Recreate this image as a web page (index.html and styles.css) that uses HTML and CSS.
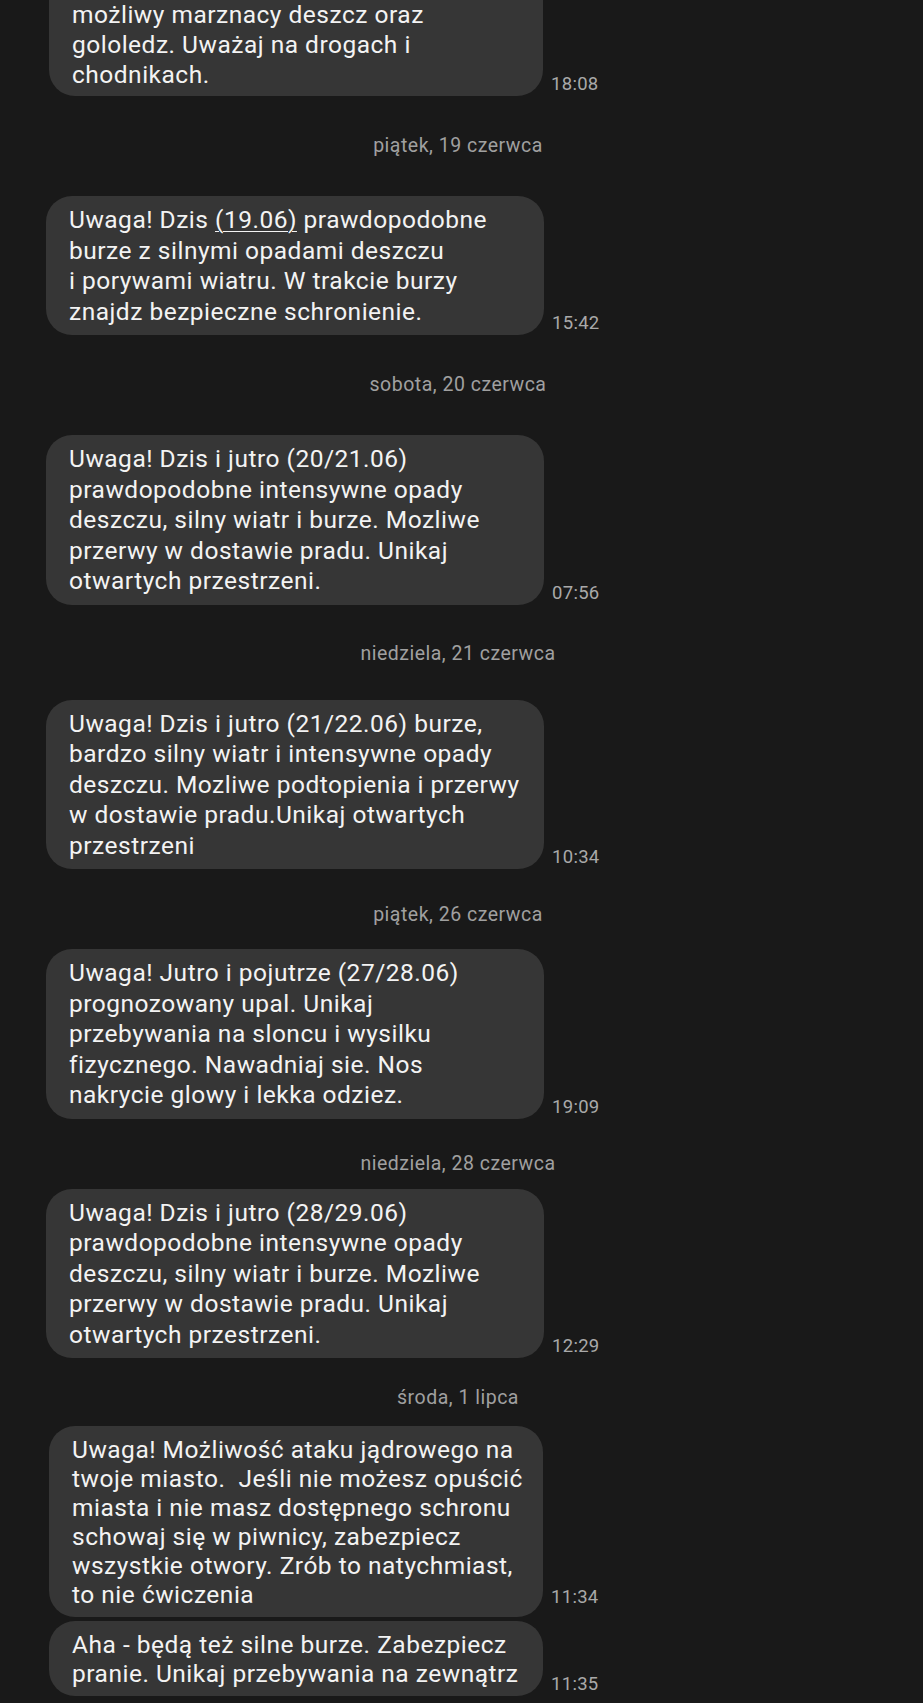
FILE: index.html
```html
<!DOCTYPE html>
<html>

<head>
    <link rel="stylesheet" href="styles.css">
</head>

<body>
    <div class="thread">
        <div class="row row-shift">
            <div class="bubble bubble-cut">
                możliwy marznacy deszcz oraz<br>
                gololedz. Uważaj na drogach i<br>
                chodnikach.
            </div>
            <span class="time">18:08</span>
        </div>

        <div class="date">piątek, 19 czerwca</div>
        <div class="row">
            <div class="bubble">
                Uwaga! Dzis <u>(19.06)</u> prawdopodobne<br>
                burze z silnymi opadami deszczu<br>
                i porywami wiatru. W trakcie burzy<br>
                znajdz bezpieczne schronienie.
            </div>
            <span class="time">15:42</span>
        </div>

        <div class="date">sobota, 20 czerwca</div>
        <div class="row">
            <div class="bubble">
                Uwaga! Dzis i jutro (20/21.06)<br>
                prawdopodobne intensywne opady<br>
                deszczu, silny wiatr i burze. Mozliwe<br>
                przerwy w dostawie pradu. Unikaj<br>
                otwartych przestrzeni.
            </div>
            <span class="time">07:56</span>
        </div>

        <div class="date date-b">niedziela, 21 czerwca</div>
        <div class="row">
            <div class="bubble">
                Uwaga! Dzis i jutro (21/22.06) burze,<br>
                bardzo silny wiatr i intensywne opady<br>
                deszczu. Mozliwe podtopienia i przerwy<br>
                w dostawie pradu.Unikaj otwartych<br>
                przestrzeni
            </div>
            <span class="time">10:34</span>
        </div>

        <div class="date date-c">piątek, 26 czerwca</div>
        <div class="row">
            <div class="bubble">
                Uwaga! Jutro i pojutrze (27/28.06)<br>
                prognozowany upal. Unikaj<br>
                przebywania na sloncu i wysilku<br>
                fizycznego. Nawadniaj sie. Nos<br>
                nakrycie glowy i lekka odziez.
            </div>
            <span class="time">19:09</span>
        </div>

        <div class="date date-d">niedziela, 28 czerwca</div>
        <div class="row">
            <div class="bubble">
                Uwaga! Dzis i jutro (28/29.06)<br>
                prawdopodobne intensywne opady<br>
                deszczu, silny wiatr i burze. Mozliwe<br>
                przerwy w dostawie pradu. Unikaj<br>
                otwartych przestrzeni.
            </div>
            <span class="time">12:29</span>
        </div>

        <div class="date date-e">środa, 1 lipca</div>
        <div class="row row-shift">
            <div class="bubble bubble-tight">
                Uwaga! Możliwość ataku jądrowego na<br>
                twoje miasto.&nbsp; Jeśli nie możesz opuścić<br>
                miasta i nie masz dostępnego schronu<br>
                schowaj się w piwnicy, zabezpiecz<br>
                wszystkie otwory. Zrób to natychmiast,<br>
                to nie ćwiczenia
            </div>
            <span class="time time-high">11:34</span>
        </div>
        <div class="row row-shift row-follow">
            <div class="bubble bubble-tight">
                Aha - będą też silne burze. Zabezpiecz<br>
                pranie. Unikaj przebywania na zewnątrz
            </div>
            <span class="time">11:35</span>
        </div>
    </div>
</body>

</html>
```

FILE: styles.css
```css
body {
    margin: 0;
    background-color: #191919;
    font-family: Roboto, "Liberation Sans", sans-serif;
    height: 1703px;
    overflow: hidden;
}

.thread {
    width: 916px;
}

.row {
    display: flex;
    align-items: flex-end;
    padding-left: 46px;
}

.row-shift {
    padding-left: 49px;
}

.row-follow {
    margin-top: 4px;
}

.bubble {
    box-sizing: border-box;
    width: 498px;
    padding: 9px 16px 8px 23px;
    background-color: #363636;
    border-radius: 26px;
    color: #f3f3f3;
    font-size: 24.5px;
    letter-spacing: 0.5px;
    line-height: 30.5px;
    white-space: nowrap;
}

.row-shift .bubble {
    width: 494px;
}

.bubble u {
    text-decoration-thickness: 1px;
    text-underline-offset: 3px;
}

/* first bubble starts above the visible area */
.bubble-cut {
    padding-top: 0;
    padding-bottom: 6px;
    line-height: 30px;
    border-top-left-radius: 0;
    border-top-right-radius: 0;
}

.bubble-tight {
    line-height: 29px;
}

.time {
    margin: 0 0 2px 8px;
    color: #a9a9a9;
    font-size: 18.5px;
    letter-spacing: 0.3px;
    line-height: 20px;
}

.time-high {
    margin-bottom: 10px;
}

.date {
    margin: 38px 0;
    text-align: center;
    color: #a0a0a0;
    font-size: 19.5px;
    letter-spacing: 0.5px;
    line-height: 24px;
}

.date-b {
    margin: 37px 0 34px;
}

.date-c {
    margin: 34px 0 22px;
}

.date-d {
    margin: 33px 0 13px;
}

.date-e {
    margin: 28px 0 16px;
}
```
